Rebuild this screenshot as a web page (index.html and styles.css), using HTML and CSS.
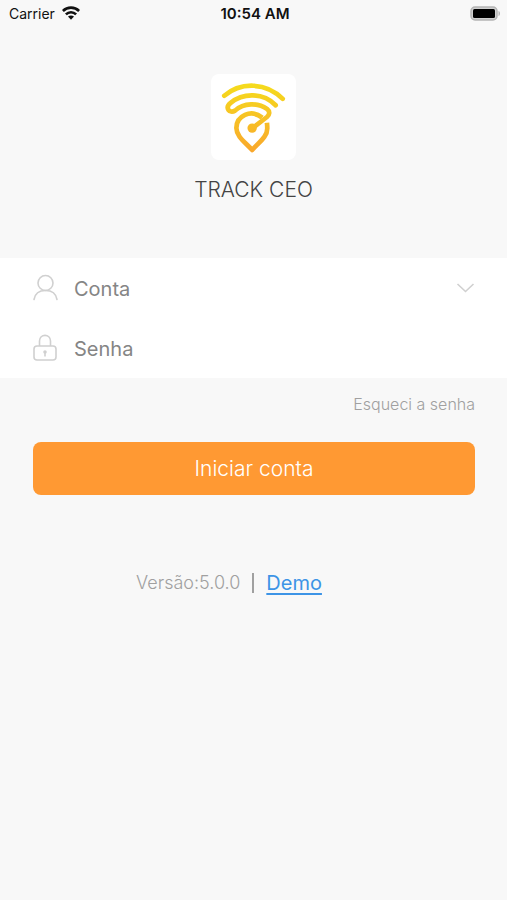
FILE: index.html
```html
<!DOCTYPE html>
<html lang="pt">
<head>
<meta charset="utf-8">
<meta name="viewport" content="width=device-width, initial-scale=1">
<title>TRACK CEO</title>
<link rel="stylesheet" href="styles.css">
</head>
<body>
<header class="status">
  <div class="carrier">
    <span>Carrier</span>
    <svg class="wifi" viewBox="0 0 18 14" aria-hidden="true">
      <g fill="none" stroke="#111" stroke-width="2.6">
        <path d="M.9 5C5.400 .5 12.600 .5 17.100 5"/>
        <path d="M3.900 8.400C6.800 5.500 11.200 5.500 14.100 8.400"/>
      </g>
      <path d="M6 10.600C7.700 9 10.300 9 12 10.600L9 13.700Z" fill="#111"/>
    </svg>
  </div>
  <time class="clock">10:54 AM</time>
  <svg class="battery" viewBox="0 0 31 15" aria-hidden="true">
    <rect x="1" y="1" width="26" height="13" rx="4" fill="#d0d0d0" stroke="#b4b4b4" stroke-width="1.500"/>
    <rect x="3" y="3" width="22" height="9" rx="1.500" fill="#000"/>
    <path d="M28.500 5C30.500 5.500 30.500 9.500 28.500 10Z" fill="#b4b4b4"/>
  </svg>
</header>
<main>
  <section class="brand">
    <svg class="logo" viewBox="24 22 252 256" aria-hidden="true">
      <defs>
        <linearGradient id="gold" gradientUnits="userSpaceOnUse" x1="0" y1="50" x2="0" y2="255">
          <stop offset="0" stop-color="#f5dc1d"/>
          <stop offset="1" stop-color="#f9a72c"/>
        </linearGradient>
      </defs>
      <g fill="none" stroke="url(#gold)" stroke-width="14" stroke-linecap="round" stroke-linejoin="round">
        <path d="M63 87C112 45 187 46 237 96"/>
        <path d="M216 115C178 76 118 78 82 108C64 123 78 141 95 131C121 107 164 107 190 126C200 134 198 143 190 150L147 183"/>
        <path stroke-linecap="butt" d="M176 152C142 125 99 147 99 183C99 207 124 224 146 248C168 224 191 209 191 184Q191 176 190 167"/>
      </g>
      <circle cx="146" cy="183" r="14" fill="url(#gold)"/>
    </svg>
    <h1>TRACK CEO</h1>
  </section>
  <form>
    <div class="fields">
      <div class="field">
        <label for="account" aria-label="Conta">
          <svg class="icon" viewBox="0 0 26 28" fill="none" stroke="#d0d0d0" stroke-width="1.600" stroke-linecap="round">
            <circle cx="12.500" cy="9" r="7.500"/>
            <path d="M1 25.500C2 19.500 6.500 16.500 12.500 16.500S23 19.500 24 25.500"/>
          </svg>
        </label>
        <input id="account" type="text" placeholder="Conta">
        <button class="toggle" type="button" aria-label="Contas">
          <svg viewBox="0 0 18 10" fill="none" stroke="#d0d0d0" stroke-width="1.600"><path d="M1 1L9 8.500L17 1"/></svg>
        </button>
      </div>
      <div class="field">
        <label for="password" aria-label="Senha">
          <svg class="icon" viewBox="0 0 26 28" fill="none" stroke="#d0d0d0" stroke-width="1.600">
            <rect x="1" y="12" width="22" height="14" rx="3"/>
            <path d="M6.500 12V7C6.500 -.5 17.500 -.5 17.500 7V12"/>
            <circle cx="12" cy="18" r="1" fill="#bbb"/>
            <path d="M12 18V22.500"/>
          </svg>
        </label>
        <input id="password" type="password" placeholder="Senha">
      </div>
    </div>
    <div class="actions">
      <a class="forgot" href="#">Esqueci a senha</a>
      <button class="submit" type="submit">Iniciar conta</button>
    </div>
  </form>
  <footer>
    <span>Versão:5.0.0</span>
    <span class="divider"></span>
    <a class="demo" href="#">Demo</a>
  </footer>
</main>
</body>
</html>
```
FILE: styles.css
```css
* { box-sizing: border-box; }
body {
  margin: 0;
  min-height: 100vh;
  background: #f8f8f8;
  color: #444;
  font-family: Inter, "Liberation Sans", sans-serif;
}
svg { display: block; }
a { color: inherit; text-decoration: none; }
button { border: 0; font: inherit; cursor: pointer; }
.status {
  display: grid;
  grid-template-columns: 1fr auto 1fr;
  align-items: center;
  height: 26px;
  padding: 0 6px 0 9px;
  color: #111;
  font-size: 14px;
}
.carrier { display: flex; align-items: center; gap: 7px; }
.wifi { width: 18px; height: 14px; }
.clock { font-size: 15px; font-weight: 600; }
.battery { width: 31px; height: 15px; justify-self: end; }
.brand {
  display: flex;
  flex-direction: column;
  align-items: center;
  gap: 16px;
  height: 232px;
  padding-top: 48px;
}
.logo { width: 85px; height: 86px; border-radius: 8px; background: #fff; }
h1 {
  margin: 0;
  font-size: 21px;
  font-weight: 300;
  line-height: 28px;
}
.fields { background: #fff; padding: 0 32px 0 33px; }
.field { display: flex; align-items: center; height: 60px; }
.icon { width: 26px; height: 28px; }
.field input {
  flex: 1;
  min-width: 0;
  height: 40px;
  padding: 1px 15px 0;
  border: 0;
  outline: 0;
  background: none;
  color: #444;
  font: 400 20px Inter, "Liberation Sans", sans-serif;
}
.field input::placeholder { color: #858585; opacity: 1; }
.toggle { padding: 0; background: none; }
.toggle svg { width: 19px; height: 10px; }
.actions { display: flex; flex-direction: column; padding: 14px 32px 0 33px; }
.forgot {
  align-self: flex-end;
  color: #a0a0a0;
  font-size: 16px;
  font-weight: 300;
  line-height: 24px;
}
.submit {
  height: 53px;
  margin-top: 26px;
  border-radius: 8px;
  background: #ff9933;
  color: #fff;
  font-size: 21px;
  font-weight: 300;
}
footer {
  display: flex;
  justify-content: center;
  align-items: center;
  gap: 12px;
  padding: 74px 49px 0 0;
  color: #a0a0a0;
  font-size: 18px;
  font-weight: 300;
  line-height: 28px;
}
.divider { width: 2px; height: 20px; background: #a0a0a0; }
.demo {
  color: #3d94e6;
  font-size: 20px;
  font-weight: 400;
  text-decoration: underline;
  text-underline-offset: 3px;
}
```
